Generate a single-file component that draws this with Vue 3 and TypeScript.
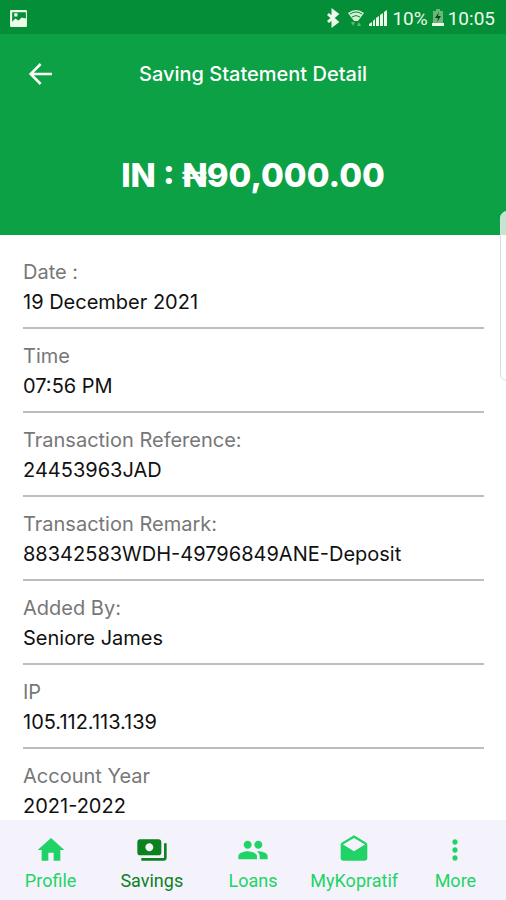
<script setup lang="ts">
interface Detail {
  label: string
  value: string
}

interface Tab {
  name: string
  paths: string[]
  active?: boolean
}

const details: Detail[] = [
  { label: 'Date :', value: '19 December 2021' },
  { label: 'Time', value: '07:56 PM' },
  { label: 'Transaction Reference:', value: '24453963JAD' },
  { label: 'Transaction Remark:', value: '88342583WDH-49796849ANE-Deposit' },
  { label: 'Added By:', value: 'Seniore James' },
  { label: 'IP', value: '105.112.113.139' },
  { label: 'Account Year', value: '2021-2022' },
]

const tabs: Tab[] = [
  { name: 'Profile', paths: ['M10 20v-6h4v6h5v-8h3L12 3 2 12h3v8z'] },
  {
    name: 'Savings',
    active: true,
    paths: [
      'M19 14V6c0-1.100-.9-2-2-2H3c-1.100 0-2 .9-2 2v8c0 1.100.9 2 2 2h14c1.100 0 2-.9 2-2zm-9-1c-1.660 0-3-1.340-3-3s1.340-3 3-3 3 1.340 3 3-1.340 3-3 3zm13-6v11c0 1.100-.9 2-2 2H4v-2h17V7h2z',
    ],
  },
  {
    name: 'Loans',
    paths: [
      'M16 11c1.660 0 2.990-1.340 2.990-3S17.660 5 16 5s-3 1.340-3 3 1.340 3 3 3z',
      'M8 11c1.660 0 2.990-1.340 2.990-3S9.660 5 8 5 5 6.340 5 8s1.340 3 3 3z',
      'M8 13c-2.330 0-7 1.170-7 3.500V19h14v-2.500c0-2.330-4.670-3.500-7-3.500z',
      'M16 13c-.29 0-.62.02-.97.05 1.160.84 1.970 1.970 1.970 3.450V19h6v-2.500c0-2.330-4.670-3.500-7-3.500z',
    ],
  },
  {
    name: 'MyKopratif',
    paths: [
      'M21.990 8c0-.72-.37-1.350-.94-1.700L12 1 2.950 6.300C2.380 6.650 2 7.280 2 8v10c0 1.100.9 2 2 2h16c1.100 0 2-.9 2-2l-.01-10zM12 13L3.740 7.840 12 3l8.260 4.840L12 13z',
    ],
  },
  {
    name: 'More',
    paths: [
      'M12 8c1.100 0 2-.9 2-2s-.9-2-2-2-2 .9-2 2 .9 2 2 2zm0 2c-1.100 0-2 .9-2 2s.9 2 2 2 2-.9 2-2-.9-2-2-2zm0 6c-1.100 0-2 .9-2 2s.9 2 2 2 2-.9 2-2-.9-2-2-2z',
    ],
  },
]
</script>

<template>
  <div class="screen">
    <div class="status">
      <svg class="picture" viewBox="0 0 18 18" aria-hidden="true">
        <path
          fill-rule="evenodd"
          d="M2 1h14a1 1 0 0 1 1 1v14a1 1 0 0 1-1 1H2a1 1 0 0 1-1-1V2a1 1 0 0 1 1-1zm1 2v9l3-3 3 2 3-3 4 1V3zm2 1h3v3H5z"
        />
      </svg>
      <div class="status-right">
        <svg class="bluetooth" viewBox="0 0 14 20" aria-hidden="true">
          <path d="M2 6l9 8-4 3V3l4 3-9 8" />
        </svg>
        <svg class="wifi" viewBox="0 0 16 20" aria-hidden="true">
          <path class="fan" d="M0 5Q8-1 16 5L10 13H6z" />
          <path class="arcs" d="M2 6q6-4 12 0M4 9q4-3 8 0" />
          <path class="traffic" d="M3 14h4l-2 4zM9 18l2-4 2 4z" />
        </svg>
        <svg class="signal" viewBox="0 0 20 20" aria-hidden="true">
          <path d="M1 18v-2l3-2v4zM5 18v-5l2-2v7zM8 18v-8l3-2v10zM12 18V7l3-2v13zM16 18V4l3-2v16z" />
        </svg>
        <span>10%</span>
        <svg class="battery" viewBox="0 0 12 20" aria-hidden="true">
          <path class="case" d="M4 1h4v2h3v12H1V3h3z" />
          <path class="level" d="M0 15h12v3H0z" />
          <path class="bolt" d="M7 4L3 10h3l-1 4 4-6H6z" />
        </svg>
        <span>10:05</span>
      </div>
    </div>

    <header class="header">
      <div class="bar">
        <button class="back" type="button" aria-label="Back">
          <svg viewBox="0 0 24 24" aria-hidden="true">
            <path d="M21.500 12H4M12.500 4L4.500 12l8 8" />
          </svg>
        </button>
        <h1>Saving Statement Detail</h1>
      </div>
      <p class="amount">IN : ₦90,000.00</p>
    </header>

    <main class="content">
      <dl class="details">
        <div v-for="item in details" :key="item.label" class="row">
          <dt>{{ item.label }}</dt>
          <dd>{{ item.value }}</dd>
        </div>
      </dl>
    </main>

    <nav class="tabs">
      <a v-for="tab in tabs" :key="tab.name" href="#" class="tab" :class="{ active: tab.active }">
        <svg viewBox="0 0 24 24" aria-hidden="true">
          <path v-for="path in tab.paths" :key="path" :d="path" />
        </svg>
        <span>{{ tab.name }}</span>
      </a>
    </nav>

    <div class="edge-handle"></div>
  </div>
</template>

<style>
body {
  margin: 0;
}
</style>

<style scoped>
.screen {
  position: relative;
  display: flex;
  flex-direction: column;
  height: 100vh;
  overflow: hidden;
  background: #fff;
  color: #111;
  font-family: Inter, 'Liberation Sans', sans-serif;
}

.status {
  display: flex;
  flex: none;
  align-items: center;
  justify-content: space-between;
  height: 34px;
  padding: 2px 11px 0 9px;
  box-sizing: border-box;
  background: #048e38;
  color: #eefbe9;
  font-family: Roboto, sans-serif;
  font-size: 19px;
}

.status svg {
  height: 20px;
  fill: #eefbe9;
}

.status .picture {
  width: 19px;
  height: 19px;
}

.status-right {
  display: flex;
  align-items: center;
  gap: 4px;
}

.status .bluetooth {
  width: 14px;
  margin-right: 4px;
  fill: none;
  stroke: #eefbe9;
  stroke-width: 3;
}

.status .wifi {
  width: 16px;
}

.wifi .fan {
  fill: #d5efd2;
}

.wifi .arcs {
  fill: none;
  stroke: #048e38;
}

.wifi .traffic {
  fill: #5cba72;
}

.status .battery {
  width: 12px;
}

.battery .case {
  fill: #69b878;
}

.battery .bolt {
  fill: #10401e;
}

.header {
  flex: none;
  height: 201px;
  background: #0ca144;
  color: #fff;
}

.bar {
  display: grid;
  grid-template-columns: 56px 1fr 56px;
  align-items: center;
  height: 80px;
  padding: 0 12px;
}

.back {
  display: grid;
  place-items: center;
  height: 48px;
  padding: 0;
  border: 0;
  background: none;
}

.back svg {
  width: 30px;
  height: 30px;
  fill: none;
  stroke: #fff;
  stroke-width: 2;
}

h1 {
  margin: 0;
  font-size: 20px;
  font-weight: 500;
  line-height: 24px;
  text-align: center;
  white-space: nowrap;
}

.amount {
  margin: 40px 0 0;
  font-size: 33px;
  font-weight: 800;
  line-height: 42px;
  text-align: center;
}

.content {
  flex: 1;
  min-height: 0;
  overflow-y: auto;
  scrollbar-width: none;
}

.details {
  margin: 0;
  padding: 10px 22px 0 23px;
}

.row {
  height: 82px;
  border-bottom: 2px solid #bdbdbd;
}

.row:last-child {
  border-bottom: 0;
}

dt,
dd {
  margin: 0;
  font-size: 20px;
  line-height: 30px;
}

dt {
  padding-top: 12px;
  color: #777;
}

.tabs {
  display: grid;
  flex: none;
  grid-template-columns: repeat(5, 1fr);
  height: 80px;
  background: #f4f3fb;
}

.tab {
  display: flex;
  flex-direction: column;
  align-items: center;
  gap: 3px;
  padding-top: 14px;
  color: #21d366;
  font-family: Roboto, sans-serif;
  font-size: 18px;
  line-height: 24px;
  text-decoration: none;
}

.tab.active {
  color: #0b811f;
}

.tab svg {
  width: 32px;
  height: 32px;
  fill: currentColor;
}

.edge-handle {
  position: absolute;
  top: 211px;
  right: -8px;
  width: 12px;
  height: 168px;
  border: 1px solid #dcdcdc;
  border-radius: 8px;
  background: rgb(255 255 255 / 75%);
}
</style>
